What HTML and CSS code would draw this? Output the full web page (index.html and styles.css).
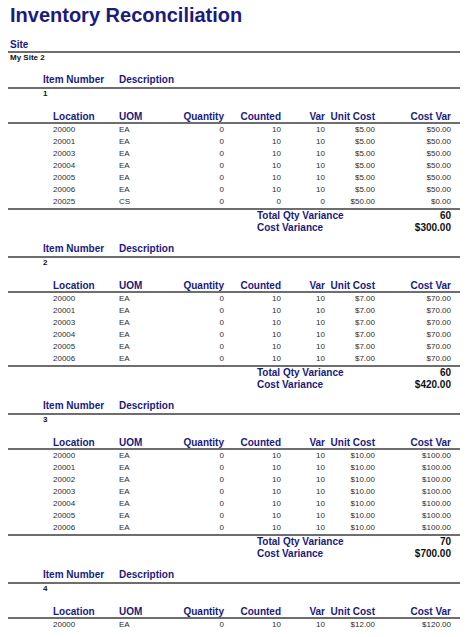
FILE: index.html
```html
<!DOCTYPE html>
<html>
<head>
<meta charset="utf-8">
<link rel="stylesheet" href="styles.css">
</head>
<body>
<div class="page">
  <h1 class="title">Inventory Reconciliation</h1>
  <div class="site-head">Site</div>
  <div class="site-name">My Site 2</div>

  <section class="item first">
    <div class="item-head"><span>Item Number</span><span>Description</span></div>
    <div class="item-no">1</div>
    <div class="grid loc-head"><span>Location</span><span>UOM</span><span class="num">Quantity</span><span class="num">Counted</span><span class="num">Var</span><span class="num">Unit Cost</span><span class="num">Cost Var</span></div>
    <div class="rows">
      <div class="grid row"><span>20000</span><span>EA</span><span class="num">0</span><span class="num">10</span><span class="num">10</span><span class="num">$5.00</span><span class="num">$50.00</span></div>
      <div class="grid row"><span>20001</span><span>EA</span><span class="num">0</span><span class="num">10</span><span class="num">10</span><span class="num">$5.00</span><span class="num">$50.00</span></div>
      <div class="grid row"><span>20003</span><span>EA</span><span class="num">0</span><span class="num">10</span><span class="num">10</span><span class="num">$5.00</span><span class="num">$50.00</span></div>
      <div class="grid row"><span>20004</span><span>EA</span><span class="num">0</span><span class="num">10</span><span class="num">10</span><span class="num">$5.00</span><span class="num">$50.00</span></div>
      <div class="grid row"><span>20005</span><span>EA</span><span class="num">0</span><span class="num">10</span><span class="num">10</span><span class="num">$5.00</span><span class="num">$50.00</span></div>
      <div class="grid row"><span>20006</span><span>EA</span><span class="num">0</span><span class="num">10</span><span class="num">10</span><span class="num">$5.00</span><span class="num">$50.00</span></div>
      <div class="grid row"><span>20025</span><span>CS</span><span class="num">0</span><span class="num">0</span><span class="num">0</span><span class="num">$50.00</span><span class="num">$0.00</span></div>
    </div>
    <div class="totals"><span>Total Qty Variance</span><span class="num">60</span><span>Cost Variance</span><span class="num">$300.00</span></div>
  </section>

  <section class="item">
    <div class="item-head"><span>Item Number</span><span>Description</span></div>
    <div class="item-no">2</div>
    <div class="grid loc-head"><span>Location</span><span>UOM</span><span class="num">Quantity</span><span class="num">Counted</span><span class="num">Var</span><span class="num">Unit Cost</span><span class="num">Cost Var</span></div>
    <div class="rows">
      <div class="grid row"><span>20000</span><span>EA</span><span class="num">0</span><span class="num">10</span><span class="num">10</span><span class="num">$7.00</span><span class="num">$70.00</span></div>
      <div class="grid row"><span>20001</span><span>EA</span><span class="num">0</span><span class="num">10</span><span class="num">10</span><span class="num">$7.00</span><span class="num">$70.00</span></div>
      <div class="grid row"><span>20003</span><span>EA</span><span class="num">0</span><span class="num">10</span><span class="num">10</span><span class="num">$7.00</span><span class="num">$70.00</span></div>
      <div class="grid row"><span>20004</span><span>EA</span><span class="num">0</span><span class="num">10</span><span class="num">10</span><span class="num">$7.00</span><span class="num">$70.00</span></div>
      <div class="grid row"><span>20005</span><span>EA</span><span class="num">0</span><span class="num">10</span><span class="num">10</span><span class="num">$7.00</span><span class="num">$70.00</span></div>
      <div class="grid row"><span>20006</span><span>EA</span><span class="num">0</span><span class="num">10</span><span class="num">10</span><span class="num">$7.00</span><span class="num">$70.00</span></div>
    </div>
    <div class="totals"><span>Total Qty Variance</span><span class="num">60</span><span>Cost Variance</span><span class="num">$420.00</span></div>
  </section>

  <section class="item">
    <div class="item-head"><span>Item Number</span><span>Description</span></div>
    <div class="item-no">3</div>
    <div class="grid loc-head"><span>Location</span><span>UOM</span><span class="num">Quantity</span><span class="num">Counted</span><span class="num">Var</span><span class="num">Unit Cost</span><span class="num">Cost Var</span></div>
    <div class="rows">
      <div class="grid row"><span>20000</span><span>EA</span><span class="num">0</span><span class="num">10</span><span class="num">10</span><span class="num">$10.00</span><span class="num">$100.00</span></div>
      <div class="grid row"><span>20001</span><span>EA</span><span class="num">0</span><span class="num">10</span><span class="num">10</span><span class="num">$10.00</span><span class="num">$100.00</span></div>
      <div class="grid row"><span>20002</span><span>EA</span><span class="num">0</span><span class="num">10</span><span class="num">10</span><span class="num">$10.00</span><span class="num">$100.00</span></div>
      <div class="grid row"><span>20003</span><span>EA</span><span class="num">0</span><span class="num">10</span><span class="num">10</span><span class="num">$10.00</span><span class="num">$100.00</span></div>
      <div class="grid row"><span>20004</span><span>EA</span><span class="num">0</span><span class="num">10</span><span class="num">10</span><span class="num">$10.00</span><span class="num">$100.00</span></div>
      <div class="grid row"><span>20005</span><span>EA</span><span class="num">0</span><span class="num">10</span><span class="num">10</span><span class="num">$10.00</span><span class="num">$100.00</span></div>
      <div class="grid row"><span>20006</span><span>EA</span><span class="num">0</span><span class="num">10</span><span class="num">10</span><span class="num">$10.00</span><span class="num">$100.00</span></div>
    </div>
    <div class="totals"><span>Total Qty Variance</span><span class="num">70</span><span>Cost Variance</span><span class="num">$700.00</span></div>
  </section>

  <section class="item">
    <div class="item-head"><span>Item Number</span><span>Description</span></div>
    <div class="item-no">4</div>
    <div class="grid loc-head"><span>Location</span><span>UOM</span><span class="num">Quantity</span><span class="num">Counted</span><span class="num">Var</span><span class="num">Unit Cost</span><span class="num">Cost Var</span></div>
    <div class="rows last">
      <div class="grid row"><span>20000</span><span>EA</span><span class="num">0</span><span class="num">10</span><span class="num">10</span><span class="num">$12.00</span><span class="num">$120.00</span></div>
    </div>
  </section>
</div>
</body>
</html>
```

FILE: styles.css
```css
html, body {
  margin: 0;
  padding: 0;
  background: #ffffff;
}

body {
  font-family: "Liberation Sans", Arial, sans-serif;
  color: #1a1a80;
}

.page {
  width: 452px;
  padding-left: 8px;
}

.title {
  margin: 4px 0 0 0;
  padding-left: 2px;
  font-size: 20px;
  line-height: 23px;
  font-weight: bold;
  color: #1a1a80;
}

.site-head {
  margin-top: 12px;
  padding-left: 2px;
  font-size: 10px;
  line-height: 12px;
  font-weight: bold;
  color: #1a1a80;
  border-bottom: 2px solid #6e6e6e;
}

.site-name {
  padding-left: 2px;
  font-size: 8px;
  line-height: 10px;
  font-weight: bold;
  color: #111111;
}

.item {
  margin-top: 9px;
}

.item.first {
  margin-top: 11px;
}

.item-head {
  display: grid;
  grid-template-columns: 76px auto;
  padding-left: 35px;
  padding-bottom: 1px;
  font-size: 10px;
  line-height: 12px;
  font-weight: bold;
  color: #1a1a80;
  border-bottom: 2px solid #6e6e6e;
}

.item-no {
  padding-left: 35px;
  font-size: 8px;
  line-height: 10px;
  font-weight: bold;
  color: #111111;
}

.grid {
  display: grid;
  grid-template-columns: 66px 51px 54px 57px 44px 50px 76px;
  padding: 0 9px 0 45px;
}

.loc-head {
  margin-top: 12px;
  font-size: 10px;
  line-height: 11px;
  font-weight: bold;
  color: #1a1a80;
  border-bottom: 2px solid #6e6e6e;
}

.rows {
  border-bottom: 2px solid #6e6e6e;
}

.rows.last {
  border-bottom: none;
}

.row {
  font-size: 8px;
  line-height: 12px;
  color: #2e2e2e;
}

.num {
  text-align: right;
}

.totals {
  display: grid;
  grid-template-columns: 1fr auto;
  padding: 0 9px 0 249px;
  font-size: 10px;
  line-height: 12px;
  font-weight: bold;
  color: #1a1a80;
}

.totals .num {
  color: #111111;
}
```
